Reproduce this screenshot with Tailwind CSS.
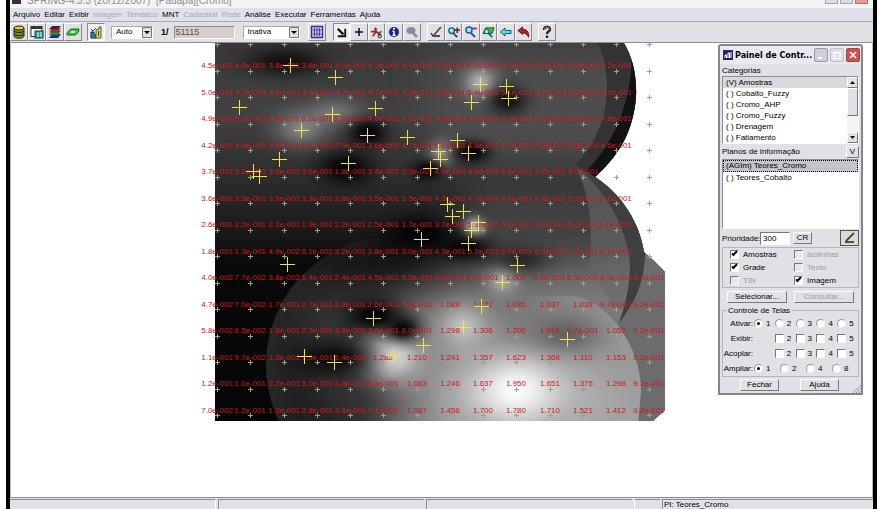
<!DOCTYPE html>
<html lang="pt-BR">
<head>
<meta charset="utf-8">
<meta name="viewport" content="width=device-width, initial-scale=1">
<title>SPRING</title>
<script src="https://cdn.jsdelivr.net/npm/@tailwindcss/browser@4"></script>
</head>
<body class="bg-white px-[6px] font-['Liberation_Sans',sans-serif] text-[8px] leading-[11px] text-black">
<div class="relative mr-[1px] flex h-screen flex-col overflow-hidden border-x-4 border-black bg-[#e1e0e5]">

  <header class="flex h-[8px] shrink-0 items-end justify-between bg-[#f3f4f4] pl-[2px] pr-[5px]">
    <div class="flex h-full items-end gap-[6px] overflow-hidden">
      <span class="mb-[4px] h-[5px] w-[9px] bg-[#33333f]"></span>
      <h1 class="mb-[2px] whitespace-pre text-[10px] leading-[10px] text-[#8f8f8f]">SPRING-4.3.3 (20/12/2007)  [Pauapa][Cromo]</h1>
    </div>
    <div class="flex gap-[2px] pb-[4px]">
      <button aria-label="Minimizar" class="h-[4px] w-[13px] border border-t-0 border-[#a5a5ae] bg-[#dcdce4]"></button>
      <button aria-label="Restaurar" class="h-[4px] w-[13px] border border-t-0 border-[#a5a5ae] bg-[#dcdce4]"></button>
      <button aria-label="Fechar janela" class="h-[4px] w-[13px] border border-t-0 border-[#c46a6a] bg-[#e59a9a]"></button>
    </div>
  </header>

  <nav class="flex h-[14px] shrink-0 items-center gap-[4px] border-b border-[#a9a9b0] bg-[#e0e0ea] pl-[3px]">
    <a href="#">Arquivo</a><a href="#">Editar</a><a href="#">Exibir</a>
    <a href="#" class="text-[#a6a6b0]">Imagem</a><a href="#" class="text-[#a6a6b0]">Temático</a>
    <a href="#">MNT</a>
    <a href="#" class="text-[#a6a6b0]">Cadastral</a><a href="#" class="text-[#a6a6b0]">Rede</a>
    <a href="#">Análise</a><a href="#">Executar</a><a href="#">Ferramentas</a><a href="#">Ajuda</a>
  </nav>

  <div class="flex h-[20px] shrink-0 items-center bg-[#e1e0e4]" id="toolbar">
    <div class="flex">
      <button aria-label="Banco de dados" class="h-[18px] w-[18px] border border-white border-r-[#888] border-b-[#888] p-[1px]"><svg viewBox="0 0 14 14"><path d="M2 3v8c0 3 10 3 10 0V3" fill="#8a8412" stroke="#222"/><ellipse cx="7" cy="3" rx="5" ry="2" fill="#d8cf3a" stroke="#222"/><path d="M2 6c1 2 9 2 10 0M2 9c1 2 9 2 10 0" fill="none" stroke="#222"/></svg></button>
      <button aria-label="Projeto" class="h-[18px] w-[18px] border border-white border-r-[#888] border-b-[#888] p-[1px]"><svg viewBox="0 0 14 14"><rect x="1" y="1.500" width="11" height="10" fill="#fff" stroke="#333"/><path d="M1 3h11" stroke="#333" stroke-width="2"/><rect x="5" y="6" width="8" height="7" fill="#2b9a94" stroke="#144"/><path d="M8 7v5M11 7v5M3 6v4" stroke="#dff"/></svg></button>
      <button aria-label="Planos" class="h-[18px] w-[18px] border border-white border-r-[#888] border-b-[#888] p-[1px]"><svg viewBox="0 0 14 14"><path d="M4 9h9l-3 4H1z" fill="#16308c"/><path d="M4 6h9l-3 4H1z" fill="#159030"/><path d="M4 3.500h9l-3 4H1z" fill="#c22424"/><path d="M4 1h9l-3 3.500H1z" fill="#3a2440"/></svg></button>
      <button aria-label="Plano ativo" class="h-[18px] w-[18px] border border-white border-r-[#888] border-b-[#888] p-[1px]"><svg viewBox="0 0 14 14"><path d="M5 4h8c0 3-2 5-4 6H1c0-2 2-5 4-6z" fill="#3fc34a" stroke="#145c1c"/><path d="M5.500 6h4l-1 2h-4z" fill="#c6f0b8"/></svg></button>
    </div>
    <button aria-label="Desenhar" class="ml-[5px] h-[18px] w-[18px] border border-[#888] border-r-white border-b-white bg-[#eeeef2] p-[1px]"><svg viewBox="0 0 14 14"><path d="M2 13V7h3v3h2v3z" fill="#2a8b8c" stroke="#123"/><path d="M7 13V5l3-1v-2h2v11z" fill="#e5d83b" stroke="#554"/><path d="M2 4l2 2 3-3" stroke="#223a9a" fill="none"/><path d="M9.500 6v5" stroke="#333"/></svg></button>

    <div class="relative ml-[6px] w-[42px]">
      <select aria-label="Escala automática" class="h-[13px] w-full appearance-none border border-[#aaa] border-r-white border-b-white bg-white pl-[4px] leading-[10px]"><option>Auto</option></select>
      <svg class="pointer-events-none absolute right-[1px] top-[1px] h-[11px] w-[10px]" viewBox="0 0 10 11"><path d="M.5.5h9v10h-9z" fill="#e1e0e4" stroke="#777"/><path d="M2 4h6L5 7z"/></svg>
    </div>
    <label for="scale" class="ml-[8px] text-[9px] font-bold">1/</label>
    <input id="scale" value="51115" class="ml-[5px] h-[13px] w-[61px] border border-[#8a8a8a] border-r-white border-b-white bg-[#d4d0c9] px-[1px] text-[9px] text-[#555]">
    <div class="relative ml-[8px] w-[57px]">
      <select aria-label="Modo" class="h-[13px] w-full appearance-none border border-[#aaa] border-r-white border-b-white bg-white pl-[4px] leading-[10px]"><option>Inativa</option></select>
      <svg class="pointer-events-none absolute right-[1px] top-[1px] h-[11px] w-[10px]" viewBox="0 0 10 11"><path d="M.5.5h9v10h-9z" fill="#e1e0e4" stroke="#777"/><path d="M2 4h6L5 7z"/></svg>
    </div>
    <button aria-label="Grade" class="ml-[8px] h-[18px] w-[18px] border border-white border-r-[#888] border-b-[#888] p-[1px]"><svg viewBox="0 0 14 14"><rect x="1.500" y="1.500" width="11" height="11" fill="#cfc4ee" stroke="#4a2c86" stroke-width="1.500"/><path d="M4.500 3v8M7 3v8M9.500 3v8M3 5h8M3 9h8" stroke="#5b3a9c"/></svg></button>
    <div class="ml-[7px] flex">
      <button aria-label="Selecionar área" class="h-[18px] w-[17px] border border-[#888] border-r-white border-b-white bg-[#f0f0f2] p-[1px]"><svg viewBox="0 0 14 14"><path d="M3 3l6 6" stroke="#111" stroke-width="2.500"/><path d="M11 3v8H3" stroke="#111" stroke-width="2" fill="none"/></svg></button>
      <button aria-label="Cursor de ponto" class="h-[18px] w-[18px] border border-white border-r-[#888] border-b-[#888] p-[1px]"><svg viewBox="0 0 14 14"><path d="M7 3v8M3 7h8" stroke="#111" stroke-width="1.500"/></svg></button>
      <button aria-label="Mover vetor" class="h-[18px] w-[17px] border border-white border-r-[#888] border-b-[#888] p-[1px]"><svg viewBox="0 0 14 14"><path d="M1 6h6l4 4M6 3v4l-3 4" stroke="#a3213a" stroke-width="1.800" fill="none"/><path d="M4 4l2-3 2 3z" fill="#b22"/><path d="M8 7l5-2-2 4z" fill="#187a35"/><circle cx="10.500" cy="11" r="1.800" fill="none" stroke="#222"/></svg></button>
      <button aria-label="Informação" class="h-[18px] w-[18px] border border-white border-r-[#888] border-b-[#888] p-[1px]"><svg viewBox="0 0 14 14"><circle cx="7" cy="7" r="5" fill="#1d2488"/><path d="M7 6v4.500M5.500 6.200H7M5.500 10.300h3" stroke="#fff" stroke-width="1.400"/><circle cx="7" cy="3.800" r="1" fill="#fff"/></svg></button>
      <button aria-label="Lupa" class="h-[18px] w-[18px] border border-white border-r-[#888] border-b-[#888] p-[1px]"><svg viewBox="0 0 14 14"><ellipse cx="6" cy="5.500" rx="4.500" ry="3.500" fill="#8c8c92"/><path d="M8 8l4 4" stroke="#8c8c92" stroke-width="2.500"/></svg></button>
    </div>
    <div class="ml-[6px] flex">
      <button aria-label="Editar" class="h-[18px] w-[18px] border border-white border-r-[#888] border-b-[#888] p-[1px]"><svg viewBox="0 0 14 14"><path d="M5 10l7-8" stroke="#6b4626" stroke-width="1.800"/><path d="M2 8l2 3h7" stroke="#222" fill="none" stroke-width="1.300"/></svg></button>
      <button aria-label="Ampliar" class="h-[18px] w-[17px] border border-white border-r-[#888] border-b-[#888] p-[1px]"><svg viewBox="0 0 14 14"><circle cx="5" cy="5" r="3" fill="#8ff2f2" stroke="#14616e" stroke-width="1.500"/><path d="M7 8l4 4" stroke="#223a9a" stroke-width="2"/><path d="M11 1.500v6M8 4.500h6" stroke="#8a1f3c" stroke-width="1.800"/></svg></button>
      <button aria-label="Reduzir" class="h-[18px] w-[18px] border border-white border-r-[#888] border-b-[#888] p-[1px]"><svg viewBox="0 0 14 14"><circle cx="5" cy="5" r="3" fill="#8ff2f2" stroke="#14619e" stroke-width="1.500"/><path d="M7 8l4 4" stroke="#5a3a9a" stroke-width="2"/><path d="M8 3.500h5" stroke="#b22a4c" stroke-width="1.800"/></svg></button>
      <button aria-label="Zoom no plano" class="h-[18px] w-[17px] border border-white border-r-[#888] border-b-[#888] p-[1px]"><svg viewBox="0 0 14 14"><path d="M4 2h9l-2 6H1z" fill="#35c04a" stroke="#145c1c"/><circle cx="5" cy="6" r="2.500" fill="#8ff2f2" stroke="#146"/><path d="M7 8l4 4" stroke="#146b4e" stroke-width="2"/></svg></button>
      <button aria-label="Anterior" class="h-[18px] w-[18px] border border-white border-r-[#888] border-b-[#888] p-[1px]"><svg viewBox="0 0 14 14"><path d="M1.500 7L6 3v2.500h6v3H6V11z" fill="#5be2e2" stroke="#155e6b"/></svg></button>
      <button aria-label="Desfazer" class="h-[18px] w-[17px] border border-white border-r-[#888] border-b-[#888] p-[1px]"><svg viewBox="0 0 14 14"><path d="M1 5l5-4v2.500c4 0 7 2 6.500 8.500C10.500 9 9 7.500 6 7.500V9z" fill="#b02626" stroke="#5a1212"/></svg></button>
    </div>
    <button aria-label="Ajuda de contexto" class="ml-[6px] h-[18px] w-[18px] border border-white border-r-[#888] border-b-[#888] p-[1px]"><svg viewBox="0 0 14 14"><path d="M4 5c0-4 6-4 6-.5C10 6.500 7 6 7 9" fill="none" stroke="#222" stroke-width="2.400"/><path d="M4.500 5c0-3 5-3 5-.5" fill="none" stroke="#d8cf6a" stroke-width=".8"/><rect x="5.800" y="10.500" width="2.400" height="2.400" fill="#222"/></svg></button>
  </div>

  <main class="min-h-0 flex-1 overflow-hidden border border-t-[#8d8d95] border-l-[#b5b5bb] border-r-[#b5b5bb] border-b-[#8d8d95] bg-white pl-[190px]">
    <svg id="map" role="img" aria-label="Mapa de teores de cromo" class="block h-[380px] w-[466px]" viewBox="201 43 466 380">
      <defs>
        <clipPath id="area"><path d="M215 43H624C632 56 637 75 636 97C633 135 616 158 595 177C622 194 640 224 644 252L655 262L665 272V410L653 421H215Z"/></clipPath>
        <linearGradient id="base" x1="0" y1="0" x2="0" y2="1"><stop offset="0" stop-color="#383838"/><stop offset=".18" stop-color="#424242"/><stop offset=".36" stop-color="#2c2c2c"/><stop offset=".48" stop-color="#1c1c1c"/><stop offset=".58" stop-color="#090909"/><stop offset="1" stop-color="#060606"/></linearGradient>
        <radialGradient id="light"><stop offset="0" stop-color="#fff"/><stop offset=".25" stop-color="#fff" stop-opacity=".68"/><stop offset=".5" stop-color="#fff" stop-opacity=".3"/><stop offset=".75" stop-color="#fff" stop-opacity=".08"/><stop offset="1" stop-color="#fff" stop-opacity="0"/></radialGradient>
        <radialGradient id="dark"><stop offset="0" stop-color="#000"/><stop offset=".25" stop-color="#000" stop-opacity=".8"/><stop offset=".5" stop-color="#000" stop-opacity=".4"/><stop offset=".75" stop-color="#000" stop-opacity=".12"/><stop offset="1" stop-color="#000" stop-opacity="0"/></radialGradient>
        <linearGradient id="edge"><stop offset="0" stop-color="#b0b0b0" stop-opacity="0"/><stop offset="1" stop-color="#b0b0b0" stop-opacity=".6"/></linearGradient>
        <linearGradient id="rim"><stop offset="0" stop-color="#505050" stop-opacity=".45"/><stop offset=".5" stop-color="#505050" stop-opacity="0"/></linearGradient>
        <filter id="soft" x="-30%" y="-30%" width="160%" height="160%"><feGaussianBlur stdDeviation="18"/></filter>
      </defs>
      <g clip-path="url(#area)">
        <rect x="215" y="43" width="450" height="380" fill="url(#base)"/>
        <g filter="url(#soft)">
          <path d="M420 50H640V160H440Z" fill="#4d4d4d"/>
          <path d="M470 185H680V290H430Z" fill="#424242"/>
          <path d="M300 300L400 268L500 260L560 400L430 470L330 430Z" fill="#2e2e2e"/>
          <path d="M415 300L480 282L590 272L700 262V480H375L400 390L375 345Z" fill="#7a7a7a"/>
          <path d="M440 350L480 340L620 370L660 480H430Z" fill="#999"/>
        </g>
        <circle cx="395" cy="365" r="129" fill="url(#rim)"/>
        <path d="M577 170C592 200 592 235 590 265L615 310L680 300V150Z" fill="#686868" opacity=".6"/>
        <path d="M618 324C632 345 641 370 641 390L638 425H680V255L645 250Z" fill="#6c6c6c"/>
        <path d="M598 43C614 80 610 130 575 165L595 177L650 150V43Z" fill="#333"/>
        <path d="M630 43C636 75 624 135 586 171L598 180L650 130V43Z" fill="#121212"/>
        <path d="M570 160C608 192 628 230 630 265C630 290 624 308 619 323C637 300 645 280 645 250C640 220 622 190 595 177Z" fill="#3f3f3f"/>
        <path d="M575 296C612 304 641 350 641 390L638 425H520V296Z" fill="url(#edge)"/>
        <ellipse cx="516" cy="392" rx="120" ry="70" fill="url(#light)" opacity=".7"/>
        <ellipse cx="516" cy="390" rx="60" ry="50" fill="url(#light)"/>
        <ellipse cx="392" cy="357" rx="54" ry="48" fill="url(#light)" opacity=".85"/>
        <ellipse cx="463" cy="326" rx="50" ry="44" fill="url(#light)" opacity=".55"/>
        <ellipse cx="502" cy="280" rx="30" ry="28" fill="url(#light)" opacity=".5"/>
        <ellipse cx="480" cy="82" rx="32" ry="30" fill="url(#light)" opacity=".6"/>
        <ellipse cx="301" cy="129" rx="50" ry="34" fill="url(#light)" opacity=".4"/>
        <ellipse cx="335" cy="112" rx="50" ry="28" fill="url(#light)" opacity=".28"/>
        <ellipse cx="441" cy="154" rx="24" ry="26" fill="url(#light)" opacity=".45"/>
        <ellipse cx="474" cy="228" rx="20" ry="20" fill="url(#light)" opacity=".8"/>
        <ellipse cx="285" cy="62" rx="70" ry="26" fill="url(#dark)" opacity=".75"/>
        <ellipse cx="368" cy="133" rx="34" ry="24" fill="url(#dark)"/>
        <ellipse cx="346" cy="168" rx="46" ry="30" fill="url(#dark)"/>
        <ellipse cx="428" cy="170" rx="26" ry="18" fill="url(#dark)"/>
        <ellipse cx="472" cy="152" rx="32" ry="20" fill="url(#dark)"/>
        <ellipse cx="508" cy="100" rx="34" ry="26" fill="url(#dark)" opacity=".8"/>
        <ellipse cx="421" cy="234" rx="60" ry="30" fill="url(#dark)"/>
        <ellipse cx="466" cy="248" rx="44" ry="24" fill="url(#dark)"/>
        <ellipse cx="375" cy="316" rx="48" ry="28" fill="url(#dark)"/>
        <ellipse cx="403" cy="329" rx="32" ry="24" fill="url(#dark)"/>
        <ellipse cx="520" cy="260" rx="50" ry="24" fill="url(#dark)" opacity=".5"/>
        <ellipse cx="335" cy="358" rx="70" ry="30" fill="url(#dark)" opacity=".8"/>
        <ellipse cx="567" cy="335" rx="60" ry="34" fill="url(#dark)" opacity=".3"/>
      </g>
      <path id="ticks" stroke="#98a28a" fill="none"/>
      <g id="values" fill="#d0141c" text-anchor="middle" class="text-[8px]"></g>
      <path id="samples" stroke="#ece64c" fill="none"/>
    </svg>
  </main>

  <footer class="flex h-[11px] shrink-0 items-stretch gap-[2px] overflow-hidden pt-[1px]">
    <div class="w-[206px] border-t border-r border-t-[#8d8d95] border-r-white"></div>
    <div class="w-[206px] border-t border-l border-[#8d8d95]"></div>
    <div class="w-[206px] border-t border-l border-[#8d8d95]"></div>
    <div class="w-[26px] border-t border-l border-t-[#8d8d95] border-l-white"></div>
    <div class="flex-1 border-t border-l border-[#8d8d95] pl-[1px] leading-[10px]">PI: Teores_Cromo</div>
  </footer>

  <section aria-label="Painel de Controle" class="absolute right-[10px] top-[44px] w-[145px] rounded-t-[3px] border-2 border-[#85858c] bg-[#e1e0e4] pb-[2px]">
    <div class="flex h-[18px] items-center gap-[2px] bg-[#e9e9ef] pl-[3px] pr-[1px]">
      <svg class="h-[10px] w-[10px] shrink-0" viewBox="0 0 10 10"><rect width="10" height="10" fill="#20246e"/><path d="M2 8V5h1.500v3M5 8V3h1.500v5M8 8V2" stroke="#fff" fill="none"/></svg>
      <h2 class="min-w-0 flex-1 whitespace-nowrap font-bold font-['DejaVu_Sans',sans-serif]">Painel de Contr...</h2>
      <button aria-label="Minimizar painel" class="h-[14px] w-[14px] shrink-0 rounded-[2px] border border-[#9999a5] bg-[#cfcfdc]"><svg viewBox="0 0 12 12"><path d="M3 9h4" stroke="#fff" stroke-width="2"/></svg></button>
      <button aria-label="Maximizar painel" class="h-[14px] w-[14px] shrink-0 rounded-[2px] border border-[#c0c0ca] bg-[#dfdfe6]"><svg viewBox="0 0 12 12"><path d="M3 3.500h6v6H3z" stroke="#fff" stroke-width="1.500" fill="none"/></svg></button>
      <button aria-label="Fechar painel" class="h-[14px] w-[14px] shrink-0 rounded-[2px] border border-[#a04444] bg-[#cc5252]"><svg viewBox="0 0 12 12"><path d="M3 3l6 6M9 3l-6 6" stroke="#fff" stroke-width="1.600"/></svg></button>
    </div>

    <div class="px-[2px]">
      <h3 class="pt-[1px]">Categorias</h3>
      <div class="flex h-[68px] border border-[#8d8d95] border-r-white border-b-white bg-white">
        <ul role="listbox" aria-label="Categorias" class="flex-1">
          <li role="option" aria-selected="true" class="bg-[#d9d9dc] pl-[3px]">(V) Amostras</li>
          <li role="option" class="pl-[3px]">( ) Cobalto_Fuzzy</li>
          <li role="option" class="pl-[3px]">( ) Cromo_AHP</li>
          <li role="option" class="pl-[3px]">( ) Cromo_Fuzzy</li>
          <li role="option" class="pl-[3px]">( ) Drenagem</li>
          <li role="option" class="pl-[3px]">( ) Fatiamento</li>
        </ul>
        <div class="flex w-[11px] flex-col bg-[#f3f3f5]">
          <button aria-label="Rolar para cima" class="h-[11px] border border-white border-r-[#777] border-b-[#777] bg-[#e1e0e4]"><svg viewBox="0 0 9 9"><path d="M2 6h5L4.500 3z"/></svg></button>
          <div class="h-[28px] border border-white border-r-[#777] border-b-[#777] bg-[#e1e0e4]"></div>
          <button aria-label="Rolar para baixo" class="mt-auto h-[11px] border border-white border-r-[#777] border-b-[#777] bg-[#e1e0e4]"><svg viewBox="0 0 9 9"><path d="M2 3h5L4.500 6z"/></svg></button>
        </div>
      </div>
      <div class="flex h-[15px] items-center justify-between">
        <h3>Planos de Informação</h3>
        <button class="h-[12px] w-[13px] border border-white border-r-[#777] border-b-[#777] leading-[10px]">V</button>
      </div>
      <ul role="listbox" aria-label="Planos de Informação" class="h-[70px] border border-[#8d8d95] border-r-white border-b-white bg-white">
        <li role="option" aria-selected="true" class="h-[12px] border border-dotted border-black bg-[#c3c3cb] pl-[2px] leading-[10px]">(AGIm) Teores_Cromo</li>
        <li role="option" class="pl-[3px]">( ) Teores_Cobalto</li>
      </ul>
      <div class="flex h-[18px] items-center">
        <label for="prio" class="w-[38px] whitespace-nowrap">Prioridade:</label>
        <input id="prio" value="300" class="h-[13px] w-[30px] border border-[#777] border-r-white border-b-white bg-white px-[2px]">
        <button class="ml-[3px] h-[12px] w-[19px] border border-white border-r-[#777] border-b-[#777] leading-[10px]">CR</button>
        <button aria-label="Editar plano" class="ml-auto h-[16px] w-[19px] border border-[#555] bg-[#dcdad2]"><svg viewBox="0 0 17 14"><path d="M5 10l8-8" stroke="#554433" stroke-width="1.800"/><path d="M4 11h9" stroke="#222" stroke-width="1.500"/></svg></button>
      </div>
    </div>

    <div class="mx-[2px] grid grid-cols-2 gap-y-[2px] border border-[#b5b5bd] py-[1px] pl-[7px]" id="layers"></div>

    <div class="flex justify-between px-[7px] pt-[3px]">
      <button class="h-[12px] w-[60px] border border-white border-r-[#777] border-b-[#777] leading-[10px]">Selecionar...</button>
      <button class="h-[12px] w-[60px] border border-white border-r-[#777] border-b-[#777] leading-[10px] text-[#9a9aa2]">Consultar...</button>
    </div>

    <fieldset class="mx-[2px] mt-[2px] border border-[#b5b5bd]">
      <legend class="ml-[4px] px-[1px]">Controle de Telas</legend>
      <div id="screens"></div>
    </fieldset>

    <div class="flex justify-between pl-[20px] pr-[22px] pt-[2px]">
      <button class="h-[12px] w-[39px] border border-white border-r-[#777] border-b-[#777] leading-[10px]">Fechar</button>
      <button class="h-[12px] w-[39px] border border-white border-r-[#777] border-b-[#777] leading-[10px]">Ajuda</button>
    </div>
    <svg class="absolute bottom-0 right-0 h-[9px] w-[9px]" viewBox="0 0 9 9"><path d="M1 9l8-8M4 9l5-5M7 9l2-2" stroke="#999"/></svg>
  </section>
</div>

<script>
const BOX = "relative h-[9px] w-[9px] shrink-0 appearance-none border border-[#777] border-r-white border-b-white bg-white disabled:bg-[#e8e8ec] checked:after:absolute checked:after:left-[2px] checked:after:top-[-1px] checked:after:h-[6px] checked:after:w-[3px] checked:after:rotate-45 checked:after:border-r-2 checked:after:border-b-2 checked:after:border-black";
const DOT = "relative h-[9px] w-[9px] shrink-0 appearance-none rounded-full border border-[#999] border-r-[#eee] border-b-[#eee] bg-white checked:after:absolute checked:after:left-[2px] checked:after:top-[2px] checked:after:h-[3px] checked:after:w-[3px] checked:after:rounded-full checked:after:bg-black";

document.getElementById("layers").innerHTML = [
  ["Amostras", 1, 1], ["Isolinhas", 0, 0], ["Grade", 1, 1], ["Texto", 0, 0], ["TIN", 0, 0], ["Imagem", 1, 1]
].map(([t, on, en]) => `<label class="flex items-center gap-[4px] ${en ? "" : "text-[#9a9aa2]"}"><input type="checkbox" class="${BOX}" ${on ? "checked" : ""} ${en ? "" : "disabled"}>${t}</label>`).join("");

const row = (name, kind, opts) => `<div class="flex h-[15px] items-center"><span class="w-[30px] text-right">${name}</span><div class="grid flex-1 ${opts.length === 5 ? "grid-cols-5" : "grid-cols-4"} pl-[1px]">` +
  opts.map((o, i) => o ? `<label class="flex items-center gap-[3px]"><input type="${kind}" name="${name}" class="${kind === "radio" ? DOT : BOX}" ${kind === "radio" && i === 0 ? "checked" : ""}>${o}</label>` : "<span></span>").join("") + "</div></div>";
document.getElementById("screens").innerHTML =
  row("Ativar:", "radio", ["1", "2", "3", "4", "5"]) + row("Exibir:", "checkbox", ["", "2", "3", "4", "5"]) +
  row("Acoplar:", "checkbox", ["", "2", "3", "4", "5"]) + row("Ampliar:", "radio", ["1", "2", "4", "8"]);

/* Grid values: numbers ending in a or b are mantissas for e-001 and e-002. */
const rows = [
  "4.5a 4.0a 3.8a 3.8a 4.0a 4.3a 4.7a 5.4a 6.2a 5.5a 5.3a 5.2a 5.2a",
  "5.0a 4.7a 4.6a 4.6a 4.7a 4.7a 4.8a 5.5a 6.4a 5.1a 5.2a 5.2a 5.1a",
  "4.9a 5.0a 5.3a 6.1a 5.3a 4.6a 4.7a 4.9a 5.2a 4.9a 5.0a 5.0a 4.8a",
  "4.2a 4.6a 5.4a 4.9a 2.9a 3.6a 4.7a 5.1a 4.6a 4.7a 4.8a 4.8a 4.6a",
  "3.7a 3.6a 3.8a 3.6a 1.8a 3.4a 3.3a 4.9a 4.6a 4.6a 4.8a 5.0a",
  "3.6a 3.3a 3.5a 3.3a 2.8a 3.5a 3.5a 4.3a 4.7a 4.6a 4.8a 5.2a 5.6a",
  "2.6a 2.2a 2.2a 1.9a 2.2a 2.5a 1.7a 3.7a 5.3a 5.2a 5.2a 5.6a 6.0a",
  "1.8a 1.3a 4.9b 8.1b 3.2a 3.8a 3.0a 4.3a 5.2a 6.0a 6.3a 7.3a 6.7a",
  "4.0b 7.7b 3.8b 1.4a 2.4a 4.5a 5.5a 6.6a 8.7a 1.001 8.8a 8.3a 8.3a 8.0a",
  "4.7b 7.0b 1.7a 2.7a 2.8a 2.6a 6.3a 1.088 1.072 1.035 1.037 1.038 9.7a 9.2a",
  "5.8b 8.5b 1.8a 2.3a 3.8a 3.6a 8.0a 1.298 1.306 1.206 1.019 9.7a 1.052 9.2a",
  "1.1a 9.7b 1.3a 1.9a 5.4a 1.282 1.210 1.241 1.357 1.623 1.368 1.110 1.153 9.2a",
  "1.2a 1.1a 2.2a 3.0a 4.8a 8.8a 1.083 1.246 1.637 1.950 1.651 1.375 1.298 9.2a",
  "7.0b 1.2a 1.2a 2.8a 3.8a 7.1a 1.087 1.456 1.700 1.780 1.710 1.521 1.412 9.2a"
];
const colX = c => Math.round(217 + c * 33.25), rowY = r => Math.round(44 + r * 26.5);
document.getElementById("values").innerHTML = rows.map((line, r) => line.split(" ").map((v, c) =>
  `<text x="${colX(c)}" y="${rowY(r) + 24}">${v.replace("a", "e-001").replace("b", "e-002")}</text>`).join("")).join("");

let ticks = "";
for (let r = 0; r < 15; r++) for (let c = 0; c < 14; c++) ticks += `M${colX(c) - 2} ${rowY(r) + .5}h5M${colX(c) + .5} ${rowY(r) - 2}v5`;
document.getElementById("ticks").setAttribute("d", ticks);

const samples = [[290,65],[335,77],[239,107],[332,114],[375,108],[301,130],[367,135],[407,137],[279,159],[348,163],[253,171],[259,176],[430,168],[438,151],[440,159],[457,140],[468,153],[471,102],[480,84],[506,86],[508,98],[447,204],[463,211],[452,216],[478,222],[471,230],[468,243],[421,239],[287,264],[517,265],[502,282],[481,306],[463,327],[567,339],[373,318],[393,355],[423,345],[304,356],[334,362]];
document.getElementById("samples").setAttribute("d", samples.map(([x, y]) => `M${x - 7} ${y + .5}h15M${x + .5} ${y - 7}v15`).join(""));
</script>
</body>
</html>
